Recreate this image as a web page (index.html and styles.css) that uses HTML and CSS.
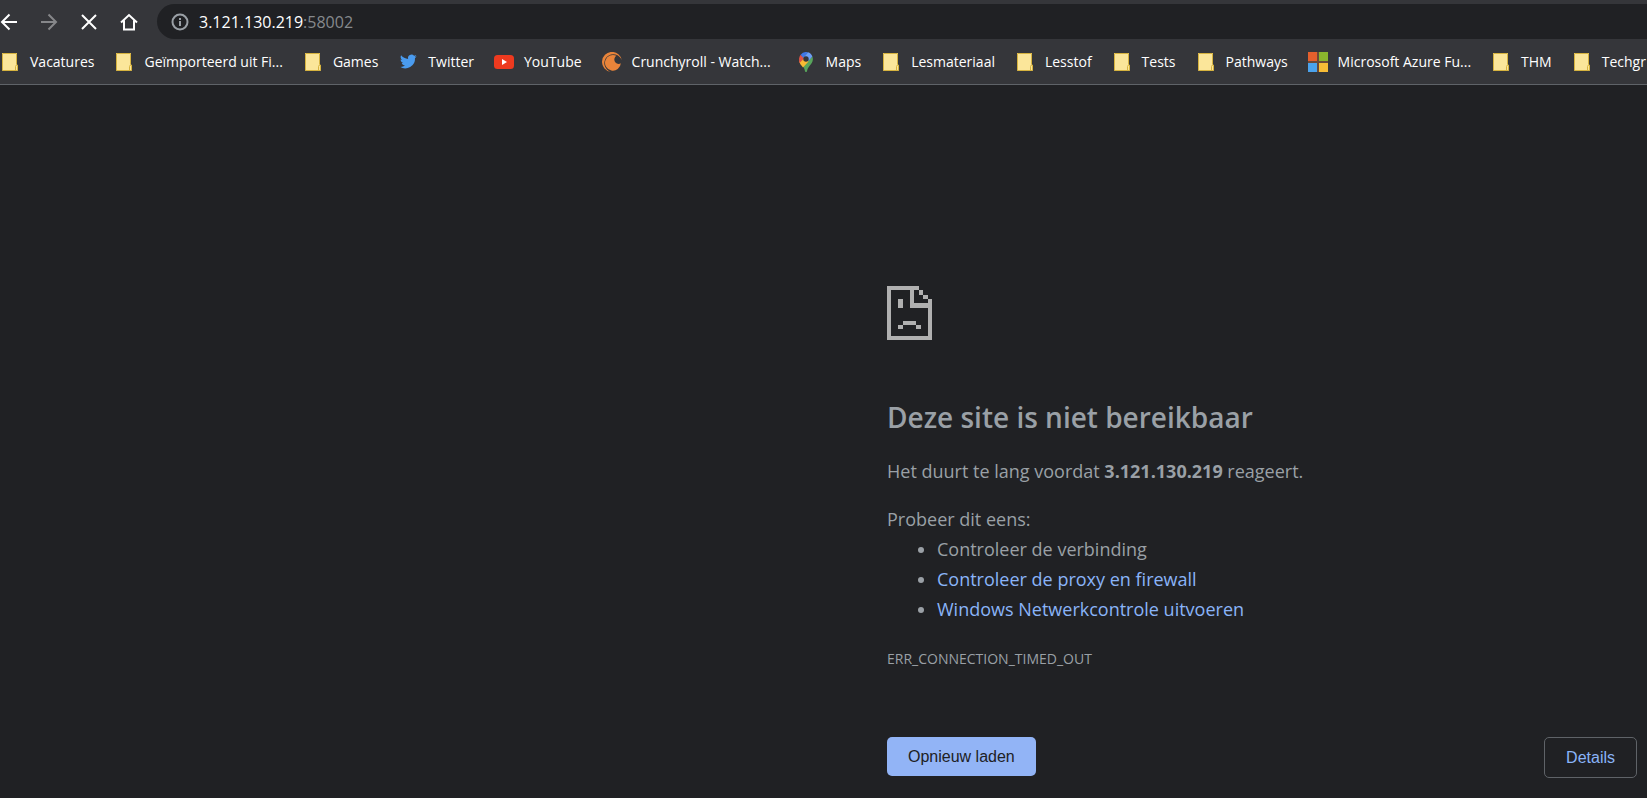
FILE: index.html
```html
<!DOCTYPE html>
<html lang="nl">
<head>
<meta charset="utf-8">
<title>3.121.130.219</title>
<link rel="stylesheet" href="styles.css">
</head>
<body>
<svg class="defs" aria-hidden="true">
  <symbol id="folder" viewBox="0 0 20 20">
    <path d="M2 1h15v12h1v5.500H2z" fill="#fbe69a"/>
    <path d="M2.500 1.500H16.500V12.500M2.500 1.500V18.500H17.500V13M15.500 18V14.500Q15.500 12.800 17.500 13" fill="none" stroke="#d6b33f"/>
  </symbol>
</svg>
<header class="chrome">
  <div class="toolbar">
    <button class="nav" aria-label="Vorige"><svg viewBox="0 0 18 18"><path d="M17 9H2M9.500 1.500 2 9l7.500 7.500"/></svg></button>
    <button class="nav nav-off" aria-label="Volgende"><svg viewBox="0 0 18 18"><path d="M1 9h15M8.500 1.500 16 9l-7.500 7.500"/></svg></button>
    <button class="nav" aria-label="Stoppen"><svg viewBox="0 0 18 18"><path d="M2 2l14 14M16 2 2 16"/></svg></button>
    <button class="nav" aria-label="Startpagina"><svg viewBox="0 0 18 18"><path d="M1 9.500 9 2l8 7.500M4 7.500V16.500h10V7.500"/></svg></button>
    <div class="address">
      <svg class="info" viewBox="0 0 18 18"><circle cx="9" cy="9" r="7.500"/><path d="M9 8v5M9 5v2"/></svg>
      <span class="url">3.121.130.219<span class="port">:58002</span></span>
    </div>
  </div>
  <nav class="bookmarks">
    <a href="#"><svg><use href="#folder"/></svg>Vacatures</a>
    <a href="#"><svg><use href="#folder"/></svg>Geïmporteerd uit Fi...</a>
    <a href="#"><svg><use href="#folder"/></svg>Games</a>
    <a href="#"><svg viewBox="0 0 24 24"><path fill="#4a9bee" d="M22.500 5.100c-.8.400-1.600.6-2.400.7.900-.5 1.500-1.300 1.800-2.300-.8.500-1.700.8-2.600 1A4.100 4.100 0 0 0 12.200 8.300C8.800 8.100 5.700 6.500 3.700 4c-1.100 1.800-.6 4.300 1.300 5.500-.7 0-1.300-.2-1.900-.5 0 2 1.400 3.700 3.300 4.100-.6.200-1.200.2-1.900.1.500 1.600 2 2.800 3.900 2.900A8.300 8.300 0 0 1 2.300 17.800 11.700 11.700 0 0 0 20.400 7.300c.8-.6 1.500-1.300 2.100-2.200z"/></svg>Twitter</a>
    <a href="#"><svg viewBox="0 0 20 20"><rect y="3" width="20" height="14" rx="3.500" fill="#ee3a1f"/><path fill="#fff" d="M8 7l5 3-5 3z"/></svg>YouTube</a>
    <a class="long" href="#"><svg viewBox="0 0 20 20"><path fill="#e9843a" d="M8.500 19.800A10 10 0 1 1 19.900 8.500 9 9 0 1 0 8.500 19.800z"/><path fill="#e9843a" d="M14.500 3.800A7.900 7.900 0 1 0 18.800 11.300a3.700 3.700 0 1 1-4.300-7.500z"/></svg>Crunchyroll - Watch...</a>
    <a href="#"><svg viewBox="0 0 20 20"><path fill="#58a55c" d="M16.400 4.500C17.900 9 15.500 11.500 13.500 14c-1.700 2.200-2.200 3.500-2.500 5.300-.3 1-1.700 1-2 0-.3-1.800-.9-3.200-2-4.700z"/><path fill="#f8bb33" d="M12.500 9.500 7 15.500C5 13 3.800 11.700 3.200 9.500L8 5z"/><path fill="#de5246" d="M4.600 2.700 8.500 6 3.600 11C2.500 7.800 3 4.800 4.600 2.700z"/><path fill="#3f78e8" d="M4.600 2.700A7.100 7.100 0 0 1 12 .3L7.400 6z"/><path fill="#6c9ff5" d="M12 .3c2 .6 3.500 2 4.400 4.200L12.500 9 7.400 5.800z"/><circle cx="10" cy="7" r="2.700" fill="#35363a"/></svg>Maps</a>
    <a href="#"><svg><use href="#folder"/></svg>Lesmateriaal</a>
    <a href="#"><svg><use href="#folder"/></svg>Lesstof</a>
    <a href="#"><svg><use href="#folder"/></svg>Tests</a>
    <a href="#"><svg><use href="#folder"/></svg>Pathways</a>
    <a href="#"><svg viewBox="0 0 20 20"><path fill="#6b4a38" d="M0 0h20v20H0z"/><path fill="#e5602d" d="M0 0h9v9H0z"/><path fill="#8ab52d" d="M11 0h9v9h-9z"/><path fill="#4ba3ec" d="M0 11h9v9H0z"/><path fill="#f8bd36" d="M11 11h9v9h-9z"/></svg>Microsoft Azure Fu...</a>
    <a href="#"><svg><use href="#folder"/></svg>THM</a>
    <a href="#"><svg><use href="#folder"/></svg>Techgr</a>
  </nav>
</header>
<main class="error">
  <svg class="sad" viewBox="0 0 135 163" aria-hidden="true" shape-rendering="crispEdges"><path d="M0 0H96V13H82V52H122V39H135V163H0ZM13 13V150H122V65H69V13ZM96 13h13v13H96ZM109 26h13v13h-13ZM33 40h14v25H33ZM47 105h40v13H47ZM33 118h14v13H33ZM87 118h14v13H87Z" fill="#b0b0b0" fill-rule="evenodd"/></svg>
  <h1>Deze site is niet bereikbaar</h1>
  <p>Het duurt te lang voordat <strong>3.121.130.219</strong> reageert.</p>
  <div class="tips">
    <p>Probeer dit eens:</p>
    <ul>
      <li>Controleer de verbinding</li>
      <li><a href="#">Controleer de proxy en firewall</a></li>
      <li><a href="#">Windows Netwerkcontrole uitvoeren</a></li>
    </ul>
  </div>
  <p class="code">ERR_CONNECTION_TIMED_OUT</p>
  <div class="actions">
    <button class="reload">Opnieuw laden</button>
    <button class="details">Details</button>
  </div>
</main>
</body>
</html>
```
FILE: styles.css
```css
* {
  box-sizing: border-box;
}

body {
  margin: 0;
  background: #202124;
  color: #9aa0a6;
  font-family: "Segoe UI", "Open Sans", sans-serif;
  overflow-x: hidden;
}

.defs {
  position: absolute;
  width: 0;
  height: 0;
}

.chrome {
  background: #35363a;
  border-bottom: 1px solid #5f6368;
  padding-top: 4px;
  overflow: hidden;
}

.toolbar {
  display: flex;
  align-items: center;
  gap: 22px;
}

.nav {
  flex: none;
  width: 18px;
  height: 18px;
  padding: 0;
  border: 0;
  background: none;
  color: #fff;
}

.nav-off {
  color: #86878a;
}

.nav svg {
  display: block;
  width: 18px;
  height: 18px;
  fill: none;
  stroke: currentColor;
  stroke-width: 2;
}

.address {
  flex: 1;
  display: flex;
  align-items: center;
  gap: 10px;
  height: 35px;
  margin-left: -3px;
  padding-left: 14px;
  border-radius: 18px 0 0 18px;
  background: #202124;
}

.info {
  width: 18px;
  height: 18px;
  fill: none;
  stroke: #9aa0a6;
  stroke-width: 2;
}

.url {
  color: #fff;
  font-size: 16px;
  line-height: 24px;
}

.port {
  color: #86898d;
}

.bookmarks {
  display: flex;
  gap: 20px;
  height: 45px;
  align-items: center;
}

.bookmarks a {
  flex: none;
  display: flex;
  align-items: center;
  gap: 10px;
  color: #fff;
  font-size: 14px;
  line-height: 20px;
  text-decoration: none;
  white-space: nowrap;
}

.bookmarks .long {
  min-width: 174px;
}

.bookmarks svg {
  width: 20px;
  height: 20px;
}

.error {
  max-width: 750px;
  margin: 201px 10px 0 auto;
  font-size: 18px;
  line-height: 30px;
}

.sad {
  display: block;
  width: 45px;
  height: 54px;
}

h1 {
  margin: 59px 0 21px;
  font-size: 28px;
  font-weight: 600;
  line-height: 36px;
}

p {
  margin: 0;
}

.tips {
  margin-top: 18px;
}

ul {
  margin: 0;
  padding-left: 50px;
}

.error a {
  color: #8ab4f8;
  text-decoration: none;
}

.code {
  margin-top: 20px;
  font-size: 14px;
}

.actions {
  display: flex;
  justify-content: space-between;
  align-items: flex-start;
  margin: 63px 0 20px;
}

.actions button {
  padding: 0 21px;
  border-radius: 5px;
  font-family: Arial, "Liberation Sans", sans-serif;
  font-size: 16px;
}

.reload {
  height: 39px;
  border: 0;
  background: #92b4f6;
  color: #202124;
}

.actions .details {
  height: 41px;
  border: 1px solid #5f6368;
  background: none;
  color: #8ab4f8;
}
```
